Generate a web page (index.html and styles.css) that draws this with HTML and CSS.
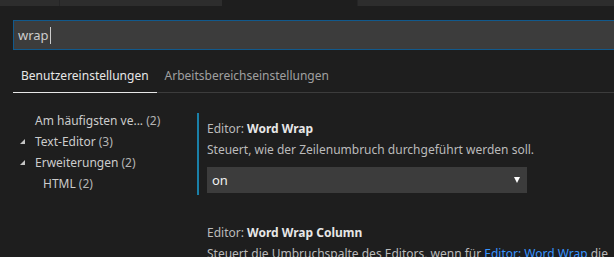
FILE: index.html
```html
<!DOCTYPE html>
<html lang="de">
<head>
    <meta charset="UTF-8">
    <title>Einstellungen</title>
    <link rel="stylesheet" href="styles.css">
</head>
<body>
    <div class="editor-tabs">
        <div class="editor-tab tab-a"></div>
        <div class="editor-tab tab-b"></div>
        <div class="editor-tab tab-active"></div>
        <div class="editor-tab tab-c"></div>
    </div>

    <div class="search">
        <div class="search-input">wrap<span class="caret"></span></div>
    </div>

    <div class="scope-tabs">
        <div class="scope-tab active">Benutzereinstellungen</div>
        <div class="scope-tab">Arbeitsbereichseinstellungen</div>
    </div>

    <div class="main">
        <div class="toc">
            <div class="toc-row">Am häufigsten ve... <span class="count">(2)</span></div>
            <div class="toc-row"><span class="twistie"></span>Text-Editor <span class="count">(3)</span></div>
            <div class="toc-row"><span class="twistie"></span>Erweiterungen <span class="count">(2)</span></div>
            <div class="toc-row child">HTML <span class="count">(2)</span></div>
        </div>

        <div class="settings">
            <div class="setting focused">
                <div class="setting-title"><span class="category">Editor:</span> <b>Word Wrap</b></div>
                <div class="setting-desc">Steuert, wie der Zeilenumbruch durchgeführt werden soll.</div>
                <div class="select">
                    <span>on</span>
                    <span class="arrow"></span>
                </div>
            </div>
            <div class="setting">
                <div class="setting-title"><span class="category">Editor:</span> <b>Word Wrap Column</b></div>
                <div class="setting-desc nowrap">Steuert die Umbruchspalte des Editors, wenn für <a href="#">Editor: Word Wrap</a> die</div>
            </div>
        </div>
    </div>
</body>
</html>
```

FILE: styles.css
```css
html, body {
    margin: 0;
    padding: 0;
    background: #1e1e1e;
    overflow: hidden;
}
body {
    font-family: 'Noto Sans', 'Open Sans', sans-serif;
    font-size: 12px;
    color: #cccccc;
    width: 614px;
    height: 257px;
}
.editor-tabs {
    display: flex;
    height: 6px;
}
.editor-tab {
    background: #2d2d2d;
}
.tab-a {
    width: 59px;
    border-right: 1px solid #252526;
}
.tab-b {
    width: 162px;
}
.tab-active {
    width: 135px;
    background: #1e1e1e;
}
.tab-c {
    flex: 1;
    border-left: 1px solid #252526;
}
.search {
    padding: 14px 0 0 13px;
    overflow: hidden;
}
.search-input {
    box-sizing: border-box;
    height: 30px;
    width: 620px;
    background: #3c3c3c;
    border: 1px solid #11598c;
    border-right: none;
    padding-left: 4px;
    font-size: 13px;
    color: #cccccc;
    display: flex;
    align-items: center;
}
.caret {
    width: 1px;
    height: 17px;
    background: #cccccc;
    margin-left: 1px;
}
.scope-tabs {
    display: flex;
    margin-left: 13px;
    margin-top: 14px;
    border-bottom: 1px solid #3c3c3c;
}
.scope-tab {
    padding: 0 8px;
    height: 28px;
    line-height: 24px;
    color: #a0a0a0;
}
.scope-tab.active {
    color: #e7e7e7;
    border-bottom: 1px solid #e7e7e7;
    margin-bottom: -1px;
}
.main {
    display: flex;
    padding-top: 17px;
}
.toc {
    width: 189px;
    flex-shrink: 0;
}
.toc-row {
    height: 21px;
    line-height: 21px;
    padding-left: 35px;
    position: relative;
    white-space: nowrap;
}
.toc-row.child {
    padding-left: 43px;
}
.count {
    color: #b4b4b4;
}
.twistie {
    position: absolute;
    left: 20px;
    top: 8px;
    width: 0;
    height: 0;
    border-left: 5px solid transparent;
    border-bottom: 5px solid #c5c5c5;
}
.settings {
    flex: 1;
    min-width: 0;
    padding-left: 8px;
    margin-top: 3px;
    overflow: hidden;
}
.setting {
    padding: 5px 0 2px 8px;
    border-left: 2px solid transparent;
    margin-bottom: 22px;
}
.setting.focused {
    border-left-color: #1a80a8;
}
.setting-title {
    height: 21px;
    line-height: 21px;
    color: #bbbbbb;
    white-space: nowrap;
}
.setting-title b {
    color: #e7e7e7;
    font-weight: bold;
}
.setting-desc {
    height: 21px;
    line-height: 21px;
    color: #bbbbbb;
    margin-bottom: 7px;
}
.nowrap {
    white-space: nowrap;
}
.setting-desc a {
    color: #3794ff;
    text-decoration: none;
}
.select {
    width: 320px;
    height: 26px;
    background: #3c3c3c;
    color: #f0f0f0;
    font-size: 13px;
    display: flex;
    align-items: center;
    justify-content: space-between;
    padding: 0 7px 0 5px;
    box-sizing: border-box;
}
.arrow {
    width: 0;
    height: 0;
    border-left: 3.5px solid transparent;
    border-right: 3.5px solid transparent;
    border-top: 6px solid #ffffff;
}
```
